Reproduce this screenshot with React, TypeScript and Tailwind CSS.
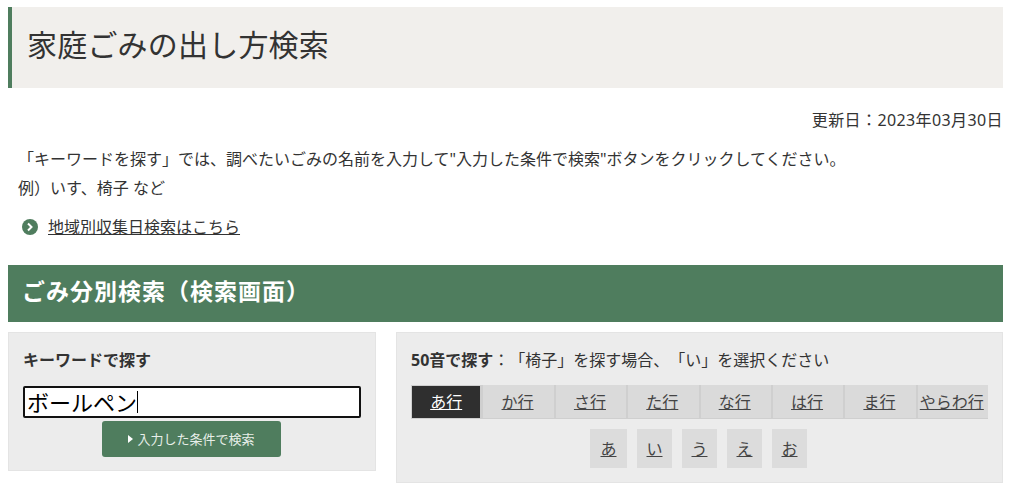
const rows = ['あ行', 'か行', 'さ行', 'た行', 'な行', 'は行', 'ま行', 'やらわ行'];
const kana = ['あ', 'い', 'う', 'え', 'お'];

export default function App() {
  return (
    <div className="h-[495px] overflow-hidden bg-white pl-2 pr-[21px] pt-[7px] font-['Noto_Sans','Noto_Sans_CJK_JP',sans-serif] text-[16px] text-[#333] [text-spacing-trim:space-all]">
      <h1 className="flex h-[81px] items-center border-l-[4px] border-[#4f7d5e] bg-[#f1efec] pb-[5px] pl-[15px] text-[30px] font-normal leading-none tracking-[0.2px]">
        家庭ごみの出し方検索
      </h1>

      <p className="mt-[21px] text-right leading-[22px] tracking-[0.4px]">更新日：2023年03月30日</p>

      <p className="mt-[17px] pl-2.5 leading-[22px]">「キーワードを探す」では、調べたいごみの名前を入力して"入力した条件で検索"ボタンをクリックしてください。</p>
      <p className="mt-[7px] pl-2.5 leading-[22px]">例）いす、椅子 など</p>

      <div className="mt-[17px] flex items-center pl-3.5 leading-[22px]">
        <svg viewBox="0 0 16 16" className="mr-[10px] h-4 w-4">
          <circle cx="8" cy="8" r="8" fill="#4f7d5e" />
          <path d="M6 4.5 9.5 8 6 11.5" fill="none" stroke="#fff" strokeWidth="2" />
        </svg>
        <a className="underline">地域別収集日検索はこちら</a>
      </div>

      <h2 className="mt-[27px] flex h-[57px] items-center bg-[#4f7d5e] pb-[4px] pl-3.5 text-[23px] font-bold leading-none tracking-[1px] text-white">
        ごみ分別検索（検索画面）
      </h2>

      <div className="mt-[10px] flex items-start gap-5">
        <section className="h-[139px] w-[368px] border border-[#e4e4e4] bg-[#ececec] px-3.5 pt-4">
          <h3 className="font-bold leading-[22px]">キーワードで探す</h3>
          <div className="mt-[15px] flex h-8 items-center rounded-[2px] border-2 border-[#111] bg-white pl-[2px] text-[22px] leading-none text-black">
            <span className="border-r border-black">ボールペン</span>
          </div>
          <button className="ml-[79px] mt-[3px] flex h-9 w-[179px] items-center justify-center gap-1 rounded-[3px] bg-[#4f7d5e] text-[13px] leading-none text-[#e8efe9]">
            <span className="h-0 w-0 border-y-[4px] border-l-[5px] border-y-transparent border-l-white" />
            入力した条件で検索
          </button>
        </section>

        <section className="h-[151px] w-[607px] border border-[#e4e4e4] bg-[#ececec] px-3.5 pt-4">
          <p className="leading-[22px]"><b>50音で探す</b>：「椅子」を探す場合、「い」を選択ください</p>
          <div className="mt-[14px] flex w-[577px] bg-[#dadada]">
            {rows.map((row, i) => (
              <a key={row} className={`flex h-[34px] flex-1 items-center justify-center whitespace-nowrap border-b border-[#cfcfcf] underline ${i === 0 ? 'border border-[#ccc] bg-[#2f2f2f] text-white' : 'border-l-2 border-l-[#cfcfcf] pr-[2px] text-[#444]'}`}>
                {row}
              </a>
            ))}
          </div>
          <div className="mt-[10px] flex w-[575px] justify-center gap-2.5">
            {kana.map((k, i) => (
              <a key={k} className={`flex h-[39px] items-center justify-center bg-[#dcdcdc] text-[#444] underline ${i === 0 ? 'w-[37px]' : 'w-[35px]'}`}>{k}</a>
            ))}
          </div>
        </section>
      </div>
    </div>
  );
}
